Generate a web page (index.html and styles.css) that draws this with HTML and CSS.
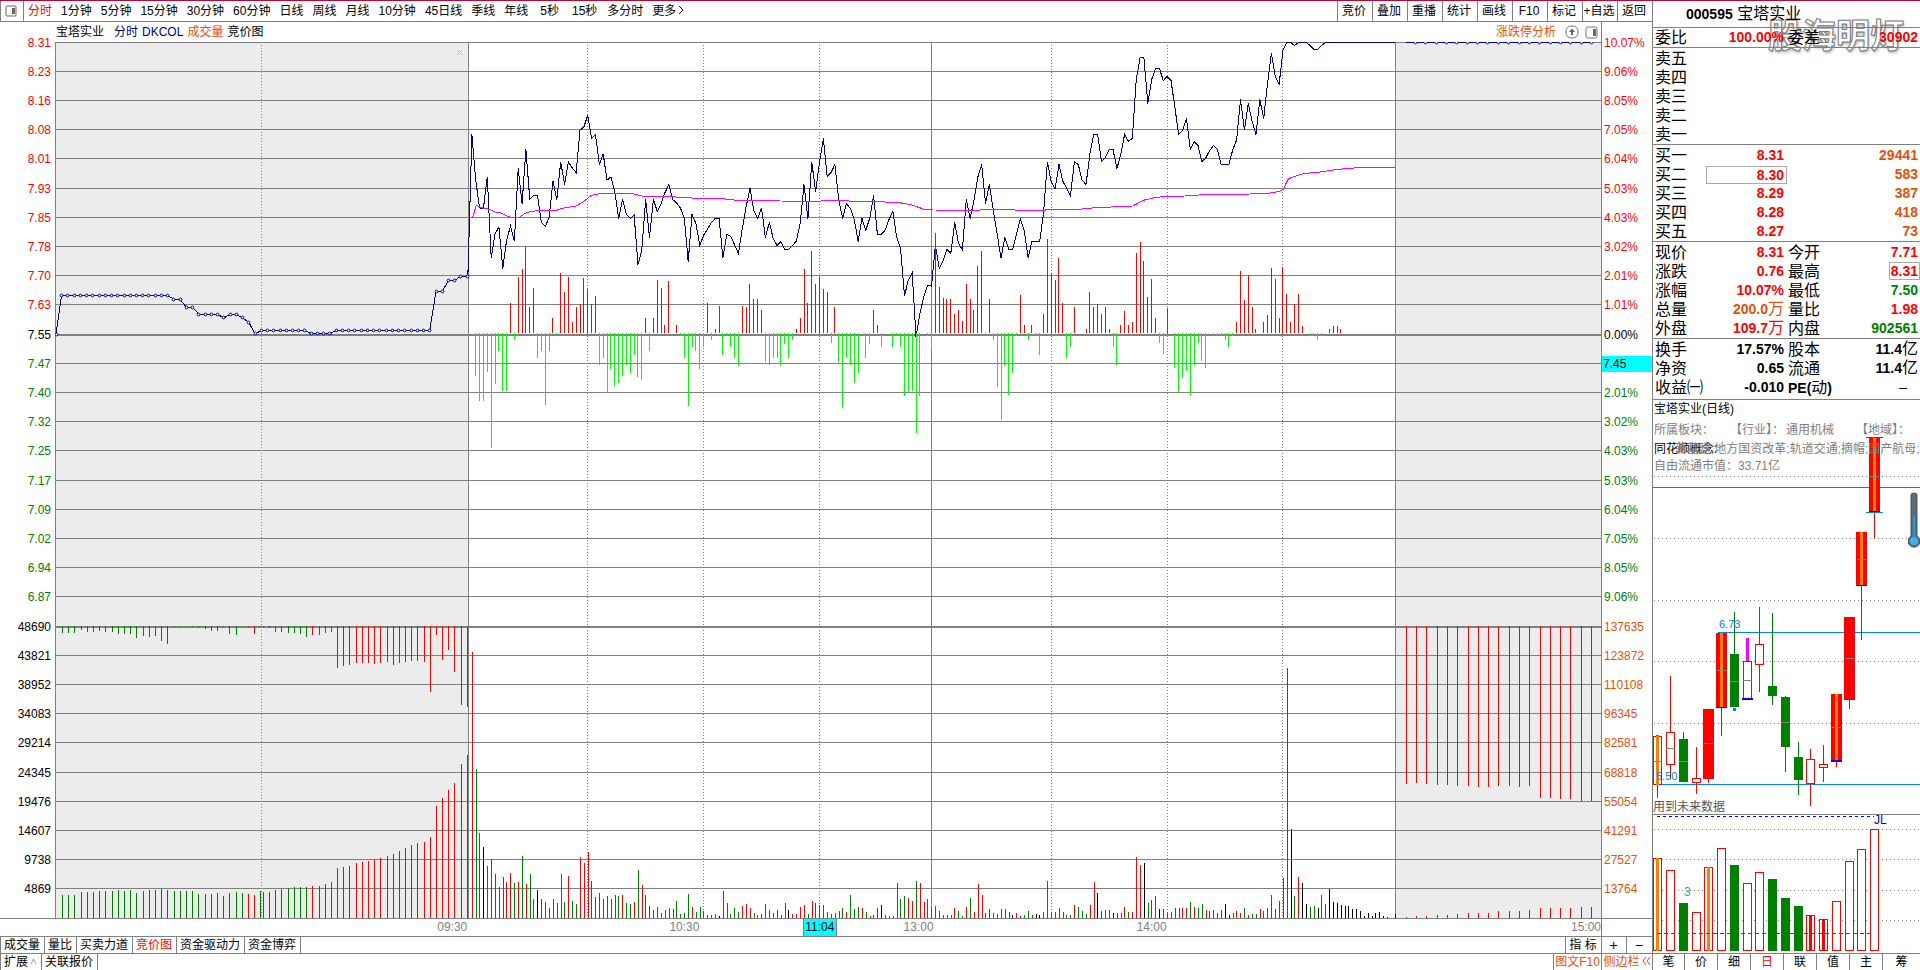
FILE: index.html
```html
<!DOCTYPE html>
<html lang="zh-CN">
<head>
    <meta charset="UTF-8">
    <meta name="viewport" content="width=device-width, initial-scale=1.0">
    <title>宝塔实业 000595 分时</title>
    <link rel="stylesheet" href="styles.css">
</head>
<body>
    <div class="app">
        <main class="main">
            <nav class="toolbar">
                <button class="icon-btn" aria-label="侧栏">
                    <svg width="12" height="12" viewBox="0 0 12 12"><rect x="1" y="1" width="10" height="10" rx="1" fill="#fff" stroke="#666"/><rect x="7" y="3" width="3" height="6" fill="#666"/></svg>
                </button>
                <div class="periods">
                    <button class="active">分时</button>
                    <button>1分钟</button>
                    <button>5分钟</button>
                    <button>15分钟</button>
                    <button>30分钟</button>
                    <button>60分钟</button>
                    <button>日线</button>
                    <button>周线</button>
                    <button>月线</button>
                    <button>10分钟</button>
                    <button>45日线</button>
                    <button>季线</button>
                    <button>年线</button>
                    <button class="sec">5秒</button>
                    <button class="sec">15秒</button>
                    <button>多分时</button>
                    <button>更多<svg class="chevron" width="6" height="10" viewBox="0 0 6 10"><path d="M1 1l4 4-4 4" fill="none" stroke="#000"/></svg></button>
                </div>
                <div class="tools">
                    <button>竞价</button>
                    <button>叠加</button>
                    <button>重播</button>
                    <button>统计</button>
                    <button>画线</button>
                    <button>F10</button>
                    <button>标记</button>
                    <button>+自选</button>
                    <button>返回</button>
                </div>
            </nav>

            <div class="chart-head">
                <div class="legend">
                    <span class="name">宝塔实业</span>
                    <span class="navy">分时</span>
                    <span class="navy">DKCOL</span>
                    <span class="orange">成交量</span>
                    <span>竞价图</span>
                </div>
                <div class="head-tools">
                    <a href="#" class="orange">涨跌停分析</a>
                    <button aria-label="展开">
                        <svg width="14" height="14" viewBox="0 0 14 14"><rect x="1" y="1" width="12" height="12" rx="5" fill="#fff" stroke="#777"/><path d="M7 3.5L10.2 7H8v3H6V7H3.800z" fill="#666"/></svg>
                    </button>
                    <button aria-label="侧栏">
                        <svg width="13" height="13" viewBox="0 0 13 13"><rect x="1" y="1" width="11" height="11" rx="2" fill="#fff" stroke="#777"/><rect x="8" y="3" width="3" height="7" fill="#666"/></svg>
                    </button>
                </div>
                <div class="head-end"></div>
            </div>

            <section class="plot">
                <div class="axis axis-left" id="axisLeft"></div>
                <svg id="minuteChart" viewBox="55 42 1546 876" preserveAspectRatio="none"></svg>
                <div class="axis axis-right" id="axisRight"></div>
            </section>

            <div class="times">
                <span>09:30</span>
                <span>10:30</span>
                <span>13:00</span>
                <span>14:00</span>
                <span>15:00</span>
                <span class="times-end"></span>
                <b class="cursor-time">11:04</b>
            </div>

            <div class="tabs">
                <button>成交量</button>
                <button>量比</button>
                <button>买卖力道</button>
                <button class="active">竞价图</button>
                <button>资金驱动力</button>
                <button>资金博弈</button>
                <div class="spacer"></div>
                <button class="ind">指 标</button>
                <button class="zoom">+</button>
                <button class="zoom">−</button>
            </div>

            <div class="tabs">
                <button>扩展<svg class="chevron" width="7" height="9" viewBox="0 0 7 9"><path d="M1 7l2.500-5L6 7" fill="none" stroke="#999"/></svg></button>
                <button>关联报价</button>
                <div class="spacer"></div>
                <button class="f10 orange">图文F10</button>
                <button class="fold orange">侧边栏<svg class="chevron" width="9" height="10" viewBox="0 0 9 10"><path d="M4 1L1 5l3 4M8 1L5 5l3 4" fill="none" stroke="#e6500a"/></svg></button>
            </div>
        </main>

        <aside class="side">
            <h1 class="stock"><b>000595</b> 宝塔实业</h1>
            <table class="quote single">
                <tr><th>委比</th><td class="red">100.00%</td><th>委差</th><td class="red">30902</td></tr>
            </table>
            <table class="quote">
                <tr><th>卖五</th><td></td><th></th><td></td></tr>
                <tr><th>卖四</th><td></td><th></th><td></td></tr>
                <tr><th>卖三</th><td></td><th></th><td></td></tr>
                <tr><th>卖二</th><td></td><th></th><td></td></tr>
                <tr><th>卖一</th><td></td><th></th><td></td></tr>
            </table>
            <table class="quote">
                <tr><th>买一</th><td class="red">8.31</td><th></th><td class="orange">29441</td></tr>
                <tr><th>买二</th><td class="red"><span class="box-wide">8.30</span></td><th></th><td class="orange">583</td></tr>
                <tr><th>买三</th><td class="red">8.29</td><th></th><td class="orange">387</td></tr>
                <tr><th>买四</th><td class="red">8.28</td><th></th><td class="orange">418</td></tr>
                <tr><th>买五</th><td class="red">8.27</td><th></th><td class="orange">73</td></tr>
            </table>
            <table class="quote">
                <tr><th>现价</th><td class="red">8.31</td><th>今开</th><td class="red">7.71</td></tr>
                <tr><th>涨跌</th><td class="red">0.76</td><th>最高</th><td class="red"><span class="box">8.31</span></td></tr>
                <tr><th>涨幅</th><td class="red">10.07%</td><th>最低</th><td class="green">7.50</td></tr>
                <tr><th>总量</th><td class="orange">200.0<span class="unit">万</span></td><th>量比</th><td class="red">1.98</td></tr>
                <tr><th>外盘</th><td class="red">109.7<span class="unit">万</span></td><th>内盘</th><td class="green">902561</td></tr>
            </table>
            <table class="quote last">
                <tr><th>换手</th><td>17.57%</td><th>股本</th><td>11.4<span class="unit">亿</span></td></tr>
                <tr><th>净资</th><td>0.65</th><th>流通</th><td>11.4<span class="unit">亿</span></td></tr>
                <tr><th>收益㈠</th><td>-0.010</td><th><b>PE(</b>动<b>)</b></th><td class="dash">–</td></tr>
            </table>

            <section class="daily">
                <svg id="dailyChart" viewBox="0 0 267 553" preserveAspectRatio="none"></svg>
                <div class="info">
                    <h2>宝塔实业(日线)</h2>
                    <p class="board"><span>所属板块：</span><span>【行业】：</span><span class="trade">通用机械</span><span>【地域】：</span></p>
                    <p class="concept"><span class="concept-name">同花顺概念:</span><span class="concept-list">新基建;地方国资改革;轨道交通;摘帽;国产航母;军工</span></p>
                    <p>自由流通市值：33.71亿</p>
                </div>
                <svg class="thermo" width="12" height="56" viewBox="0 0 12 56">
                    <path d="M3 3Q3 1 6 1T9 3V44A6 6 0 1 1 3 44Z" fill="#5c6c7a" stroke="#46525c"/>
                    <rect x="5" y="24" width="2" height="22" fill="#1e9be0"/>
                    <circle cx="6" cy="49" r="4" fill="#3ab4ea"/>
                </svg>
            </section>

            <nav class="side-tabs">
                <button>笔</button>
                <button>价</button>
                <button>细</button>
                <button class="active">日</button>
                <button>联</button>
                <button>值</button>
                <button>主</button>
                <button>筹</button>
            </nav>
            <div class="watermark">股海明灯</div>
        </aside>
    </div>

    <script src="chart.js"></script>
</body>
</html>
```

FILE: styles.css
```css
* {
    box-sizing: border-box;
}
body {
    margin: 0;
    font-family: "Liberation Sans", "Noto Sans CJK SC", sans-serif;
    font-size: 12px;
    color: #000;
    background: #fff;
}
button {
    margin: 0;
    padding: 0;
    border: none;
    background: none;
    font: inherit;
    color: inherit;
    white-space: nowrap;
    cursor: pointer;
}
a {
    text-decoration: none;
}
.red, .active { color: #f00; }
.green { color: #008000; }
.orange { color: #e6500a; }
.navy { color: #000080; }
.chevron {
    margin-left: 2px;
}

.app {
    display: flex;
    height: 100vh;
    border-top: 1px solid #c00030;
    overflow: hidden;
}
.main {
    flex: 1;
    min-width: 0;
    display: flex;
    flex-direction: column;
}

/* top toolbar */
.toolbar {
    display: flex;
    height: 21px;
    border-bottom: 1px solid #808080;
}
.icon-btn {
    width: 24px;
    padding-right: 2px;
    border-right: 1px solid #808080;
    border-left: 1px solid #808080;
    line-height: 0;
}
.periods {
    flex: 1;
    display: flex;
    gap: 9px;
    padding-left: 4px;
    line-height: 20px;
}
.sec {
    padding: 0 1px 0 3px;
}
.tools {
    display: flex;
    line-height: 20px;
}
.tools button {
    width: 35px;
    padding-right: 2px;
    border-left: 1px solid #808080;
}

.chart-head {
    display: flex;
    height: 20px;
    line-height: 20px;
}
.legend {
    flex: 1;
    display: flex;
    gap: 4px;
    padding-left: 56px;
}
.legend .name {
    margin-right: 6px;
}
.head-tools {
    display: flex;
    align-items: center;
    gap: 6px;
    padding-right: 3px;
}
.head-tools a {
    margin-right: 3px;
}
.head-tools button {
    line-height: 0;
}
.head-end {
    width: 51px;
    border-left: 1px solid #808080;
}

/* minute chart */
.plot {
    flex: 1;
    min-height: 0;
    display: flex;
}
#minuteChart {
    flex: 1;
    min-width: 0;
    height: 100%;
    shape-rendering: crispEdges;
}
#minuteChart .ticks {
    shape-rendering: geometricPrecision;
}
.axis {
    display: grid;
    grid-auto-rows: 1fr;
    align-items: center;
    line-height: 16px;
    height: 100%;
}
.axis span {
    margin-top: -28px;
}
.axis-left {
    width: 55px;
    padding-right: 4px;
    text-align: right;
}
.axis-right {
    width: 51px;
    border-left: 1px solid #808080;
}
.axis-right span {
    padding-left: 2px;
}
.axis .cursor {
    padding-left: 1px;
    background: #0ff;
}

.times {
    position: relative;
    display: grid;
    grid-template-columns: 467fr 232fr 234fr 233fr 434fr 51px;
    height: 18px;
    line-height: 16px;
    border-top: 1px solid #808080;
    color: #808080;
    text-align: right;
}
.times-end {
    border-left: 1px solid #808080;
}
/* marks the hovered minute, lies over the time axis */
.cursor-time {
    position: absolute;
    left: 48.6%;
    top: 0;
    width: 34px;
    height: 17px;
    border: 1px solid #808080;
    border-width: 0 1px;
    background: #0ff;
    color: #000;
    font-weight: normal;
    text-align: center;
}

.tabs {
    display: flex;
    height: 17px;
    line-height: 16px;
    border-top: 1px solid #808080;
    border-left: 1px solid #808080;
}
.tabs button {
    padding: 0 4px 0 3px;
    border-right: 1px solid #808080;
}
.spacer {
    flex: 1;
    border-right: 1px solid #808080;
}
.tabs .ind {
    width: 36px;
}
.tabs .zoom {
    width: 25px;
    font-size: 14px;
}
.tabs .f10 {
    width: 48px;
    padding: 0;
}
.tabs .fold {
    width: 50px;
    padding: 0;
}
.tabs .zoom:last-child, .tabs .fold {
    border-right: none;
}

/* quote panel */
.side {
    position: relative;
    z-index: 0;
    width: 268px;
    display: flex;
    flex-direction: column;
    border-left: 1px solid #808080;
}
.stock {
    margin: 0;
    height: 26px;
    padding-left: 33px;
    font-size: 16px;
    font-weight: normal;
    line-height: 26px;
}
.stock b {
    font-size: 14px;
}
.quote {
    width: 100%;
    table-layout: fixed;
    border-collapse: separate;
    border-spacing: 0;
    border-top: 1px solid #808080;
    padding-top: 1px;
}
.quote.single {
    padding-top: 0;
}
.quote.last {
    padding-bottom: 2px;
    border-bottom: 1px solid #808080;
}
.quote th, .quote td {
    height: 19px;
    padding: 0;
    line-height: 19px;
    white-space: nowrap;
}
.quote th {
    width: 50px;
    padding-left: 2px;
    font-size: 16px;
    font-weight: normal;
    text-align: left;
}
.quote th + td {
    font-size: 14px;
    font-weight: bold;
    text-align: right;
}
.quote td:nth-child(2) {
    width: 81px;
}
.quote th:nth-child(3) {
    padding-left: 4px;
}
.quote td:nth-child(4) {
    padding-right: 2px;
}
.quote th b {
    font-size: 14px;
    line-height: 16px;
}
.quote td.dash {
    padding-right: 13px;
    font-weight: normal;
}
.unit {
    font-size: 16px;
    font-weight: normal;
    line-height: 16px;
}
.box-wide, .box {
    line-height: 16px;
    border: 1px solid #aaa;
}
.box-wide {
    display: block;
    margin: 0 -3px 0 3px;
    padding-right: 2px;
}
.box {
    display: inline-block;
    margin-right: -2px;
    padding: 0 1px;
}

/* daily k-line */
.daily {
    position: relative;
    flex: 1;
    min-height: 0;
}
#dailyChart {
    display: block;
    width: 100%;
    height: 100%;
}
#dailyChart .bars {
    shape-rendering: crispEdges;
}
.info {
    position: absolute;
    top: 0;
    left: 0;
    right: 0;
    padding-left: 1px;
    overflow: hidden;
    color: #808080;
    white-space: nowrap;
}
.info h2 {
    margin: 0 0 3px;
    font-size: 12px;
    font-weight: normal;
    line-height: 18px;
    color: #000;
}
.info p {
    margin: 0;
    line-height: 18px;
}
.info p:last-child {
    line-height: 14px;
}
.board {
    display: flex;
}
.board span:first-child {
    margin-right: 16px;
}
.trade {
    margin: 0 22px 0 2px;
}
.info .concept {
    display: grid;
    line-height: 20px;
}
.concept span {
    grid-area: 1 / 1;
}
.concept-name {
    color: #000;
}
.concept-list {
    padding-left: 21px;
}
.thermo {
    position: absolute;
    top: 92px;
    right: 0;
}
.side-tabs {
    display: flex;
    height: 17px;
    line-height: 16px;
    border-top: 1px solid #808080;
}
.side-tabs button {
    width: 33px;
    border-right: 1px solid #808080;
}
.side-tabs button:first-child {
    width: 32px;
}
.side-tabs button:last-child {
    flex: 1;
    border-right: none;
}
/* lies behind the quote figures */
.watermark {
    position: absolute;
    z-index: -1;
    top: 15px;
    right: 16px;
    font-size: 34px;
    font-weight: bold;
    line-height: 40px;
    color: #fff;
    -webkit-text-stroke: 1px #777;
    text-shadow: 1px 2px 3px rgba(0, 0, 0, 0.3);
    pointer-events: none;
}
```

FILE: chart.js
```js
// colours
const RED = '#f00', GREEN = '#008000', LIME = '#0f0', GREY = '#808080', NAVY = '#000080';
const CODE = { r: RED, g: GREEN, k: '#000' };

// plot geometry
const LEFT = 55, OPEN = 468, NOON = 931, CLOSE = 1395, RIGHT = 1601;
const TOP = 42, STEP = 29.2, BOTTOM = 918;
const minuteX = k => OPEN + k * (CLOSE - OPEN) / 240;

// price per minute, in thirds of a unit
const price = [728,313,450,533,535,440,683,612,590,715,630,588,633,415,520,358,508,496,496,577,
    588,563,452,508,395,463,395,413,427,300,290,256,325,313,403,371,450,440,485,565,
    508,553,565,554,703,660,508,622,508,544,520,487,463,508,518,533,563,694,553,580,
    646,615,597,577,565,565,683,613,618,643,670,597,530,475,542,565,533,622,577,623,
    646,634,658,658,646,633,580,463,565,395,485,395,325,439,427,403,510,565,520,535,
    568,634,565,600,565,496,613,613,600,568,544,622,656,796,750,728,920,850,800,765,
    768,646,715,692,658,669,577,640,658,508,565,510,440,403,520,463,540,612,683,622,
    658,658,612,565,600,683,634,634,634,550,395,455,475,403,453,475,496,395,403,450,
    463,370,313,313,394,382,358,358,415,373,313,333,325,150,82,82,220,148,115,115,
    151,139,151,230,313,301,265,358,334,346,394,384,361,346,358,403,403,403,358,330,
    208,300,220,273,313,208,265,160,70,140,163,60,37,37,46,37,37,37,46,58,
    58,46,37,37,37,37,37,37,37,37,37,37,37,37,37,37,37,37,37,37,37];

// average price, x/y pairs
const average = [37,565,49,526,58,530,72,535,88,538,106,547,122,548,150,562,178,562,196,550,210,545,
    230,542,290,541,302,536,325,532,349,528,373,513,394,496,420,491,515,490,545,498,600,501,
    640,499,650,502,690,503,700,505,785,506,830,511,960,513,1080,514,1085,512,1165,512,1170,514,
    1255,515,1320,518,1355,525,1390,537,1420,540,1558,541,1562,538,1663,538,1667,541,1755,541,
    1760,538,1858,538,1896,534,1953,531,2018,528,2050,511,2082,503,2116,499,2175,498,2232,494,
    2370,492,2430,489,2455,485,2470,478,2484,448,2500,440,2530,431,2580,426,2635,418,2695,413,2805,412];

// momentum bars from minute 2, 0 = no bar
const BASE = 909;
const momentum = [1038,1113,1113,1026,1254,1062,963,1083,1083,820,930,741,717,651,831,774,984,963,
    1125,963,864,917,729,786,741,876,831,822,744,777,822,798,1005,984,1089,1017,1068,1059,
    1038,1005,1029,975,1041,1050,864,963,864,750,774,885,753,0,885,917,984,1128,951,963,
    1017,951,819,930,897,828,975,918,951,984,1008,828,831,762,807,807,840,996,1005,984,
    984,1008,942,984,930,897,864,717,819,663,762,740,777,786,939,831,996,1134,984,1005,
    1059,1029,0,984,942,840,885,951,0,0,951,917,951,1098,1086,1083,1209,1098,0,917,
    954,609,771,804,807,807,852,840,873,762,807,840,708,663,917,807,930,1071,1170,1008,
    1095,1029,917,795,885,930,885,917,975,852,627,730,750,684,819,984,951,831,0,0,
    897,786,831,822,852,831,897,951,1005,885,843,885,876,669,636,693,801,747,864,939,
    972,834,0,1014,1086,1044,1023,1098,1005,939,993,1014,0,917,917,917,930,951,917,876,
    723,810,735,831,897,0,876,855,714,747,864,712,792,876,822,792,888,0,917,917,
    930,917,0,897,888,888,897];

// volume from minute 1
const volume = `r96 g447 g639 k681 r738 g717 r762 r801 g771 r786 r759 g789 r786 g708 r792 g762 r837 k810 g837 g846
    r864 r837 g849 r762 g846 r768 g843 g852 r711 r729 r696 g783 r831 g819 r837 g828 r837 g825 g828 r825
    g849 g852 r846 g750 r795 r825 g858 r870 g861 r879 r870 r864 g867 g843 g882 g879 g822 r861 g876 g861
    r873 r885 r885 r882 k888 g813 r849 g882 g864 g876 r858 r852 r864 g879 g885 r882 g852 r870 g879 g870
    r885 g849 k870 r882 r882 r861 r855 g882 r843 g849 r855 r855 g876 r882 r879 g873 g864 r876 g825 g867
    g861 r864 g876 r888 r885 g864 k855 r885 r888 r888 g789 g837 g828 r834 r843 g783 r789 r846 r837 g861
    r858 g873 r885 r885 g885 r864 g873 g888 r861 g834 r876 r792 r825 g879 r867 g879 g882 g867 r867 g876
    k885 r879 r888 g885 g873 r885 k882 k885 r876 r783 g876 g876 r864 g876 g885 g885 r855 g861 g873 g882
    r855 r786 k819 g873 r870 r870 k879 g879 r879 r861 g876 r876 r711 r735 k729 g849 r840 r828 k867 g867
    r879 g876 g864 g864 r864 r864 g846 r861 g864 g852 r870 r873 r870 g879 g870 k852 k885 r879 r873 r879
    g864 r885 g882 g882 r867 g873 r864 r825 g867 g843 r774 r144 k627 g828 r771 k789 k852 g861 g858 k864
    r825 r852 k807 k846 k849 k855 k858 k858 k867 k867 k873 k888 k879 k888 k879 k876 k888 k891 k894 k882`.split(/\s+/);

// call auction: matched volume (from the bottom) and unmatched volume (from the top)
const auctionUp = [885,885,885,876,876,876,873,873,873,870,873,870,879,873,870,870,867,870,873,873,
    873,873,882,882,882,879,888,879,876,879,882,885,874,
    876,876,870,867,864,861,861,861,858,858,852,846,804,801,798,789,786,783,780,774,768,762,753,
    744,735,729,726,711,618,594,570,549,492,465];
const auctionDown = [99,99,99,90,96,96,93,96,96,102,102,102,114,108,111,108,123,132,81,81,
    81,81,84,87,93,93,81,102,105,81,81,102,81,
    81,84,96,96,99,99,102,111,105,105,99,96,204,198,195,189,189,189,192,189,186,195,189,
    186,183,183,186,276,105,180,150,216,315,321];
const auctionX = i => i < 33 ? 62.4 + i * 6.2 : 263.4 + (i - 33) * 6.18;
const auctionRed = i => i === 30 || i === 31 || i > 40;
const auctionPrice = [[885,18],[897,2],[921,2],[942,4],[953,1],[942,2],[953,1],[966,1],[1001,1],
    [990,8],[1001,4],[990,16],[873,2],[840,2],[828,2]];

const closeDown = [552,549,552,555,555,558,558,561,561,558,558,561,558,594,594,597,597,603,603];
const closeUp = [951,948,948,945,945,942,939,939,939,933,933,933,930,924,924,924,924,921,921];

function hline(y, x1, x2) {
    return `M${x1} ${y}H${x2}`;
}
function bar(x, y1, y2) {
    return `M${Math.floor(x) + 0.5} ${Math.round(y1)}V${Math.round(y2)}`;
}
function path(d, stroke, extra = '') {
    return `<path d="${d}" fill="none" stroke="${stroke}" ${extra}/>`;
}

function drawMinute() {
    let out = '';
    out += `<rect x="${LEFT}" y="${TOP}" width="${OPEN - LEFT}" height="876" fill="#ececec"/>`;
    out += `<rect x="${CLOSE}" y="${TOP}" width="${RIGHT - CLOSE}" height="876" fill="#ececec"/>`;

    let grid = '';
    for (let i = 0; i < 30; i++) {
        grid += hline(Math.floor(TOP + i * STEP + 0.01) + 0.5, LEFT, RIGHT);
    }
    [LEFT, OPEN, NOON, CLOSE].forEach(x => { grid += bar(x, TOP, BOTTOM); });
    out += path(grid, GREY);
    out += path(hline(335, LEFT, RIGHT) + hline(627, LEFT, RIGHT), GREY, 'stroke-width="2"');
    out += path([261, 587, 703, 819, 1051, 1167, 1282].map(x => bar(x, 45, BOTTOM)).join(''), GREY, 'stroke-dasharray="1 2"');
    out += path('M457 50l5 5M462 50l-5 5', '#bbb');

    const bars = { [RED]: '', [GREEN]: '', '#000': '' };
    auctionUp.forEach((v, i) => {
        bars[auctionRed(i) ? RED : GREEN] += bar(auctionX(i), 600 + v / 3, BOTTOM);
    });
    auctionDown.forEach((v, i) => {
        bars[auctionRed(i) ? RED : GREEN] += bar(auctionX(i), 626, 600 + v / 3);
    });
    closeUp.forEach((v, i) => {
        const x = 1406.4 + i * 10.28;
        bars[RED] += bar(x, 600 + v / 3, BOTTOM) + bar(x, 626, 600 + closeDown[i] / 3);
    });
    volume.forEach((v, i) => {
        bars[CODE[v[0]]] += bar(minuteX(i + 1) + 0.3, 620 + v.slice(1) / 3, BOTTOM);
    });
    const momentumBars = { [RED]: '', [LIME]: '' };
    momentum.forEach((v, i) => {
        if (v) momentumBars[v < BASE ? RED : LIME] += bar(minuteX(i + 2), 333, 30 + v / 3);
    });
    for (const c in bars) out += path(bars[c], c);

    // price and average
    const line = price.map((v, k) => `${minuteX(k).toFixed(1)},${(30.2 + v / 3).toFixed(1)}`).join(' ');
    let avg = '';
    for (let i = 0; i < average.length; i += 2) {
        avg += `${(460 + average[i] / 3).toFixed(1)},${(30 + average[i + 1] / 3).toFixed(1)} `;
    }
    out += `<polyline points="${line}" fill="none" stroke="${NAVY}"/>`;
    out += `<polyline points="${avg}" fill="none" stroke="#f0f"/>`;
    for (const c in momentumBars) out += path(momentumBars[c], c);

    // auction price with a ring on every tick
    const dots = [[56, 334]];
    auctionPrice.forEach(([v, n]) => {
        for (let j = 0; j < n; j++) dots.push([61.6 + (dots.length - 1) * 6.24, v / 3 + 0.3]);
    });
    out += `<polyline points="${dots.map(p => p.join()).join(' ')} 468,270" fill="none" stroke="${NAVY}"/>`;
    out += path(hline(42.5, 1406, 1592), NAVY);
    for (let i = 0; i < 18; i++) dots.push([1415.5 + i * 10.35, 42.5]);
    out += '<g class="ticks">';
    dots.forEach(([x, y]) => {
        out += `<circle cx="${Math.floor(x) + 0.5}" cy="${Math.floor(y) + 0.5}" r="1.4" fill="#fff" stroke="${NAVY}"/>`;
    });
    out += '</g>';
    document.getElementById('minuteChart').innerHTML = out;
}

function fillAxis(id, labels) {
    document.getElementById(id).innerHTML = labels.map(([t, c]) => `<span class="${c}">${t}</span>`).join('');
}

function drawAxes() {
    const tone = i => i < 10 ? 'red' : i === 10 ? '' : 'green';
    const prices = '8.31 8.23 8.16 8.08 8.01 7.93 7.85 7.78 7.70 7.63 7.55 7.47 7.40 7.32 7.25 7.17 7.09 7.02 6.94 6.87'.split(' ');
    const lots = '48690 43821 38952 34083 29214 24345 19476 14607 9738 4869'.split(' ');
    const rates = '10.07 9.06 8.05 7.05 6.04 5.03 4.03 3.02 2.01 1.01 0.00 1.01 2.01 3.02 4.03 5.03 6.04 7.05 8.05 9.06'.split(' ');
    const volumes = '137635 123872 110108 96345 82581 68818 55054 41291 27527 13764'.split(' ');
    fillAxis('axisLeft', [...prices.map((t, i) => [t, tone(i)]), ...lots.map(t => [t, ''])]);
    const right = [...rates.map((t, i) => [t + '%', tone(i)]), ...volumes.map(t => [t, 'orange'])];
    right[11] = ['7.45', 'cursor'];
    fillAxis('axisRight', right);
}

// daily candles: x, high, top, bottom, low, type, middle
// types: h hollow, g green, s solid red, o solid red with stripe, p hollow with stripe
const candles = [
    [52, 925, 925, 1060, 1095, 'p', 994],
    [91, 759, 913, 1003, 1044, 'h', 958],
    [130, 913, 933, 1050, 1050, 'g', 994],
    [169, 955, 1041, 1053, 1084, 'h', 0],
    [205, 850, 850, 1043, 1054, 's', 944],
    [244, 642, 642, 846, 924, 'o', 744],
    [283, 583, 699, 845, 845, 'g', 774],
    [322, 719, 719, 822, 822, 'h', 771],
    [358, 569, 672, 728, 803, 'h', 0],
    [397, 586, 787, 814, 839, 'g', 0],
    [436, 814, 817, 955, 1023, 'g', 887],
    [475, 941, 982, 1045, 1087, 'g', 0],
    [511, 960, 988, 1056, 1117, 'h', 0],
    [550, 949, 1002, 1012, 1051, 'h', 0],
    [589, 809, 809, 992, 1010, 'o', 900],
    [628, 597, 597, 825, 850, 's', 711],
    [664, 363, 363, 512, 660, 'o', 438],
    [703, 102, 102, 308, 380, 'o', 208]
];
const dailyVolume = ['p1261', 'h1294', 'g1384', 'h1409', 'p1286', 'h1233', 'g1279', 'h1330', 'h1299',
    'g1318', 'g1370', 'g1392', 'q1417', 'q1429', 'h1379', 'h1269', 'h1236', 'h1181'];

function drawDaily() {
    const px = v => Math.floor(v / 3) - 13;
    const py = v => Math.round(v / 2.751);
    const rect = (x, y, w, h, fill) => `<rect x="${x}" y="${y}" width="${w}" height="${h}" fill="${fill}"/>`;
    const hollow = (x, y, w, h) => `<rect x="${x + 0.5}" y="${y + 0.5}" width="${w - 1}" height="${h - 1}" fill="#fff" stroke="${RED}"/>`;
    let out = '<g class="bars">';

    [210, 381, 551, 719, 889, 1181, 1264, 1349, 1431].forEach(v => {
        out += path(hline(py(v) + 0.5, 1, 267), GREY, 'stroke-dasharray="1 3"');
    });
    out += path(hline(py(1139) + 0.5, 0, 267), GREY);
    out += path(hline(py(243) - 0.5, 0, 267) + hline(py(642) - 0.5, 65, 267) + hline(py(1060) - 0.5, 0, 267), '#0080ff');

    candles.forEach(([cx, high, top, bottom, low, type, mid]) => {
        const x = px(cx), y = py(top), h = Math.max(py(bottom) - y, 4);
        out += rect(x, py(high), 1, py(low) - py(high), type === 'g' ? GREEN : RED);
        if (type === 'h' || type === 'p') out += hollow(x - 4, y, 9, h);
        if (type === 'g') out += rect(x - 4, y, 9, h, GREEN);
        if (type === 's' || type === 'o') out += rect(x - 5, y, 11, h, RED);
        if (type === 'p' || type === 'o') out += rect(x - 1, y, 3, h, '#ff8000');
        if (mid) out += rect(x - 4, py(mid), 9, 1, GREY);
        if (type === 'o') out += rect(x - 5, y + h - 1, 11, 1, '#00f');
    });
    out += rect(px(322) - 1, py(655), 3, py(719) - py(655), '#f0f');
    out += rect(px(322) - 5, py(820), 11, 2, '#00f');
    out += rect(px(589) - 5, py(990), 11, 2, '#00f');
    out += rect(px(52) - 1, py(922), 3, 1, '#f0f');
    out += rect(px(283) - 1, py(846), 3, 3, '#0080ff');
    out += rect(px(703) - 8, py(102), 17, 1, RED);
    out += rect(px(703) - 8, py(308), 17, 1, '#0080ff');

    const base = py(1515);
    dailyVolume.forEach((v, i) => {
        const x = px(candles[i][0]), y = py(v.slice(1));
        out += v[0] === 'g' ? rect(x - 4, y, 9, base - y, GREEN) : hollow(x - 4, y, 9, base - y);
        if (v[0] === 'p') out += rect(x - 1, y, 3, base - y, '#ff8000');
        if (v[0] === 'q') out += rect(x - 1, y, 3, base - y, RED);
    });
    out += path(hline(py(1145) + 0.5, 4, 221), '#00f', 'stroke-dasharray="3 3"');
    out += path(hline(py(1467) + 0.5, 4, 221), RED, 'stroke-dasharray="4 3"');
    out += '</g>';

    out += '<text x="66" y="228" font-size="11" fill="#0080ff">6.73</text>';
    out += '<text x="3" y="380" font-size="11" fill="#0080ff">5.50</text>';
    out += '<text x="0" y="411" font-size="12" fill="#555">用到未来数据</text>';
    out += '<text x="221" y="424" font-size="12" fill="#00f">JL</text>';
    out += '<text x="31" y="496" font-size="12" fill="#00b4b4">3</text>';
    document.getElementById('dailyChart').innerHTML = out;
}

drawMinute();
drawAxes();
drawDaily();
```
